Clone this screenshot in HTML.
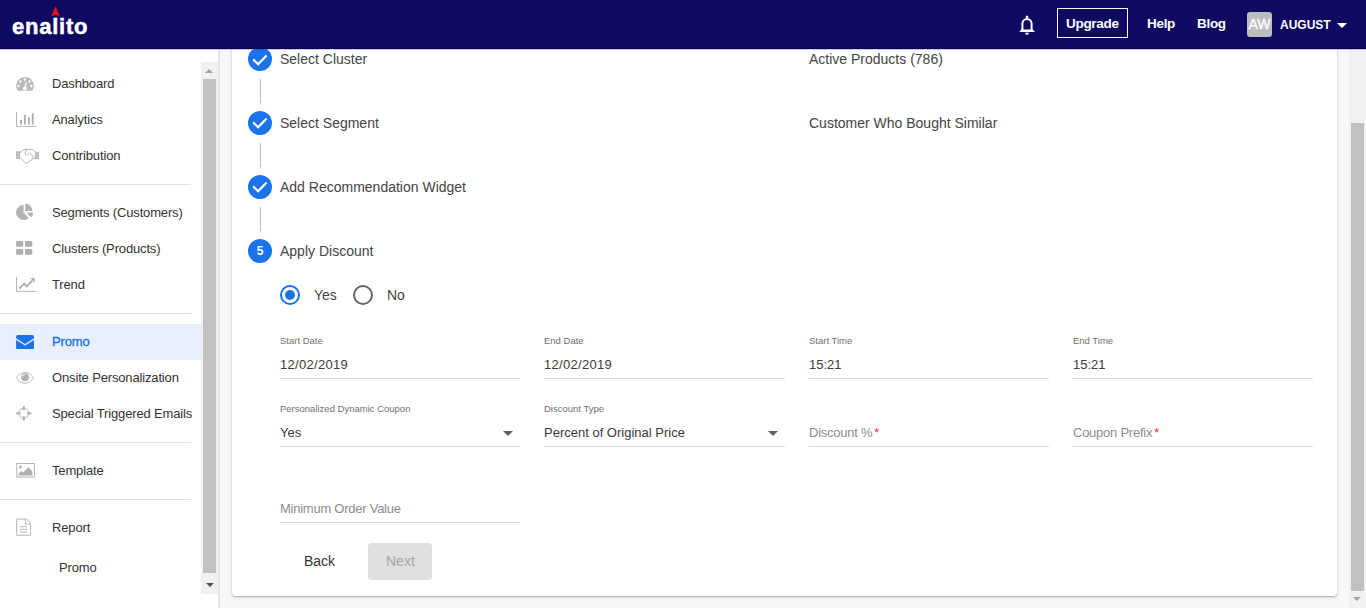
<!DOCTYPE html>
<html><head><meta charset="utf-8">
<style>
*{box-sizing:border-box;margin:0;padding:0}
html,body{width:1366px;height:608px;overflow:hidden;background:#f6f7f9;font-family:"Liberation Sans",sans-serif;color:#333}
.a{position:absolute}
#hdr{position:absolute;left:0;top:0;width:1366px;height:48px;background:#0e0a62;z-index:10}
#hdrline{position:absolute;left:0;top:48px;width:1366px;height:1px;background:#00005a;z-index:11}
#hdrfade{position:absolute;left:0;top:49px;width:1366px;height:1px;background:rgba(60,50,140,.25);z-index:11}
.hl{position:absolute;font-weight:bold;color:#fff;white-space:nowrap;font-size:13px;line-height:16px}
#side{position:absolute;left:0;top:48px;width:218px;height:560px;background:#fff}
.mi{position:absolute;left:52px;font-size:13px;color:#333;white-space:nowrap;line-height:16px;letter-spacing:-.15px}
.dv{position:absolute;left:0;width:191px;height:1px;background:#e0e0e0}
.ic{position:absolute;left:12px;width:30px;height:24px}
#card{position:absolute;left:232px;top:-40px;width:1105px;height:636px;background:#fff;border-radius:4px;box-shadow:0 1px 3px rgba(0,0,0,.22),0 1px 1px rgba(0,0,0,.14)}
.st{position:absolute;left:280px;font-size:14px;color:#444;white-space:nowrap;line-height:16px}
.circ{position:absolute;left:248px;width:24px;height:24px;border-radius:50%;background:#1a73e8}
.conn{position:absolute;left:260px;width:1px;height:24px;background:#bdbdbd}
.lbl{position:absolute;font-size:9.5px;color:#707070;white-space:nowrap;line-height:12px}
.val{position:absolute;font-size:13px;color:#3a3a3a;white-space:nowrap;line-height:16px}
.ul{position:absolute;width:240px;height:1px;background:#dadada}
.ph{position:absolute;font-size:13px;color:#8c8c8c;white-space:nowrap;line-height:16px;letter-spacing:-.25px}
.req{color:#e53935}
.tri{position:absolute;width:0;height:0;border-left:5px solid transparent;border-right:5px solid transparent;border-top:5px solid #606060}
</style></head><body>

<!-- main background pieces -->
<div class="a" style="left:218px;top:48px;width:2px;height:560px;background:#e3e4e6"></div>

<div id="card"></div>

<!-- stepper -->
<div class="circ" style="top:47px"></div>
<div class="circ" style="top:111px"></div>
<div class="circ" style="top:175px"></div>
<div class="circ" style="top:239px"></div>
<svg class="a" style="left:248px;top:47px" width="24" height="24"><path d="M5.2 12.4 L10.1 17.3 L18.6 8.4" fill="none" stroke="#fff" stroke-width="2.2"/></svg>
<svg class="a" style="left:248px;top:111px" width="24" height="24"><path d="M5.2 11.4 L10.1 16.3 L18.6 7.4" fill="none" stroke="#fff" stroke-width="2.2"/></svg>
<svg class="a" style="left:248px;top:175px" width="24" height="24"><path d="M5.2 11.4 L10.1 16.3 L18.6 7.4" fill="none" stroke="#fff" stroke-width="2.2"/></svg>
<div class="a" style="left:248px;top:243px;width:24px;text-align:center;font-size:12px;font-weight:bold;color:#fff;line-height:16px">5</div>
<div class="conn" style="top:79px"></div>
<div class="conn" style="top:143px"></div>
<div class="conn" style="top:207px"></div>

<div class="st" style="top:51px">Select Cluster</div>
<div class="st" style="top:115px">Select Segment</div>
<div class="st" style="top:179px">Add Recommendation Widget</div>
<div class="st" style="top:243px">Apply Discount</div>
<div class="st" style="left:809px;top:51px">Active Products (786)</div>
<div class="st" style="left:809px;top:115px">Customer Who Bought Similar</div>

<!-- radios -->
<svg class="a" style="left:280px;top:285px" width="20" height="20"><circle cx="10" cy="10" r="9" fill="none" stroke="#1a73e8" stroke-width="2"/><circle cx="10" cy="10" r="5" fill="#1a73e8"/></svg>
<svg class="a" style="left:353px;top:285px" width="20" height="20"><circle cx="10" cy="10" r="9" fill="none" stroke="#666" stroke-width="2"/></svg>
<div class="st" style="left:314px;top:287px">Yes</div>
<div class="st" style="left:387px;top:287px">No</div>

<!-- row 1 -->
<div class="lbl" style="left:280px;top:335px">Start Date</div>
<div class="lbl" style="left:544px;top:335px">End Date</div>
<div class="lbl" style="left:809px;top:335px">Start Time</div>
<div class="lbl" style="left:1073px;top:335px">End Time</div>
<div class="val" style="left:280px;top:357px;letter-spacing:.3px">12/02/2019</div>
<div class="val" style="left:544px;top:357px;letter-spacing:.3px">12/02/2019</div>
<div class="val" style="left:809px;top:357px">15:21</div>
<div class="val" style="left:1073px;top:357px">15:21</div>
<div class="ul" style="left:280px;top:378px"></div>
<div class="ul" style="left:544px;top:378px;width:241px"></div>
<div class="ul" style="left:809px;top:378px"></div>
<div class="ul" style="left:1073px;top:378px"></div>

<!-- row 2 -->
<div class="lbl" style="left:280px;top:403px">Personalized Dynamic Coupon</div>
<div class="lbl" style="left:544px;top:403px">Discount Type</div>
<div class="val" style="left:280px;top:425px">Yes</div>
<div class="val" style="left:544px;top:425px">Percent of Original Price</div>
<div class="tri" style="left:503px;top:431px"></div>
<div class="tri" style="left:768px;top:431px"></div>
<div class="ph" style="left:809px;top:425px">Discount %<span class="req" style="margin-left:2px">*</span></div>
<div class="ph" style="left:1073px;top:425px">Coupon Prefix<span class="req" style="margin-left:2px">*</span></div>
<div class="ul" style="left:280px;top:446px"></div>
<div class="ul" style="left:544px;top:446px;width:241px"></div>
<div class="ul" style="left:809px;top:446px"></div>
<div class="ul" style="left:1073px;top:446px"></div>

<!-- row 3 -->
<div class="ph" style="left:280px;top:501px">Minimum Order Value</div>
<div class="ul" style="left:280px;top:522px"></div>

<!-- buttons -->
<div class="a" style="left:304px;top:553px;font-size:14px;color:#333;line-height:16px">Back</div>
<div class="a" style="left:368px;top:543px;width:64px;height:37px;border-radius:4px;background:#e0e0e0"></div>
<div class="a" style="left:386px;top:553px;font-size:14px;color:#a6a6a6;line-height:16px">Next</div>

<!-- right scrollbar -->
<div class="a" style="left:1349px;top:48px;width:17px;height:560px;background:#f1f1f1"></div>
<div class="a" style="left:1351px;top:123px;width:13px;height:468px;background:#c1c1c1"></div>
<div class="tri" style="left:1353px;top:597px;border-top-color:#a3a3a3;border-left-width:4px;border-right-width:4px;border-top-width:4px"></div>

<!-- sidebar -->
<div id="side"></div>
<div class="a" style="left:0;top:324px;width:201px;height:36px;background:#e8f0fe"></div>
<div class="dv" style="top:184px"></div>
<div class="dv" style="top:313px"></div>
<div class="dv" style="top:442px"></div>
<div class="dv" style="top:499px"></div>

<div class="mi" style="top:76px">Dashboard</div>
<div class="mi" style="top:112px">Analytics</div>
<div class="mi" style="top:148px">Contribution</div>
<div class="mi" style="top:205px">Segments (Customers)</div>
<div class="mi" style="top:241px">Clusters (Products)</div>
<div class="mi" style="top:277px">Trend</div>
<div class="mi" style="top:334px;color:#1a73e8;-webkit-text-stroke:.35px #1a73e8">Promo</div>
<div class="mi" style="top:370px">Onsite Personalization</div>
<div class="mi" style="top:406px">Special Triggered Emails</div>
<div class="mi" style="top:463px">Template</div>
<div class="mi" style="top:520px">Report</div>
<div class="mi" style="left:59px;top:560px">Promo</div>

<!-- sidebar icons -->
<svg class="ic" style="top:72px" viewBox="0 0 30 24"><path d="M5.6 18.75 A8.9 8.9 0 1 1 20.4 18.75 Z" fill="#b9b9b9"/><g fill="#fff"><circle cx="12.8" cy="7.5" r="1.2"/><circle cx="8.3" cy="9.5" r="1.2"/><circle cx="17.6" cy="9.5" r="1.2"/><circle cx="6.5" cy="14" r="1.2"/><circle cx="19.3" cy="14" r="1.2"/><circle cx="12.9" cy="16.4" r="1.9"/></g><path d="M12.6 16 L14.6 10.2" stroke="#fff" stroke-width="1.2"/></svg>
<svg class="ic" style="top:108px" viewBox="0 0 30 24"><path d="M4.5 3.9 V18.4 H24.3" fill="none" stroke="#b5b5b5" stroke-width="1"/><g fill="#b0b0b0"><rect x="8" y="11.8" width="1.9" height="4.8"/><rect x="12" y="6.5" width="1.9" height="10.1"/><rect x="15.9" y="9.3" width="1.9" height="7.3"/><rect x="19.8" y="5.1" width="1.9" height="11.5"/></g></svg>
<svg class="ic" style="top:144px" viewBox="0 0 30 24"><g fill="none" stroke="#b5b5b5" stroke-width="1"><rect x="4.6" y="7.8" width="3" height="6.6" fill="#c5c5c5"/><rect x="23.6" y="8.2" width="3" height="6.2" fill="#c5c5c5"/><path d="M7.6 8.2 H9.2 L11.6 5.4 H15 L20.2 5.4 L22.4 7.8 H23.6"/><path d="M7.6 14.2 H8.6 L13.4 18.8 H15.2 L21.4 14.6 H23.6"/><path d="M15 5.4 L13.2 7.8 Q12.6 10.6 14.6 11.4 L17.8 8.8 L21.4 13.2 L20.8 14.8"/></g></svg>
<svg class="ic" style="top:198px" viewBox="0 0 30 24"><g fill="#b3b3b3"><path d="M11.6 6.9 A7.5 7.5 0 1 0 16.7 19.9 L11.6 14.4 Z"/><path d="M13.2 5.6 A7.3 7.3 0 0 1 20.5 12.9 L13.2 12.9 Z"/><path d="M14.4 14.4 L21.1 14.4 A7.4 7.4 0 0 1 19.3 19.6 Z"/></g></svg>
<svg class="ic" style="top:236px" viewBox="0 0 30 24"><g fill="#b0b0b0"><rect x="4.1" y="5" width="7.1" height="5.8" rx=".6"/><rect x="13" y="5" width="7.3" height="5.8" rx=".6"/><rect x="4.1" y="12.9" width="7.1" height="5.9" rx=".6"/><rect x="13" y="12.9" width="7.3" height="5.9" rx=".6"/></g></svg>
<svg class="ic" style="top:272px" viewBox="0 0 30 24"><path d="M4.5 5 V19.4 H24" fill="none" stroke="#b5b5b5" stroke-width="1"/><path d="M7.3 16.6 L12.3 11.6 L14.6 14.4 L20.6 8.4" fill="none" stroke="#b0b0b0" stroke-width="1.9"/><path d="M18.4 6 H22.8 V10.5 Z" fill="#b0b0b0"/></svg>
<svg class="ic" style="top:366px" viewBox="0 0 30 24"><path d="M4.6 11.9 C6.6 8 9.6 6.6 13 6.6 C16.4 6.6 19.4 8 21.4 11.9 C19.4 15.8 16.4 17.1 13 17.1 C9.6 17.1 6.6 15.8 4.6 11.9 Z" fill="none" stroke="#b5b5b5" stroke-width="1"/><circle cx="13" cy="11.2" r="3.9" fill="#b0b0b0"/><path d="M10.4 11.4 A2.8 2.8 0 0 1 13.4 8.2" fill="none" stroke="#fff" stroke-width=".9"/></svg>
<svg class="ic" style="top:401px" viewBox="0 0 30 24"><circle cx="11.8" cy="12.3" r="5" fill="none" stroke="#b5b5b5" stroke-width="1"/><g stroke="#b0b0b0" stroke-width="2"><path d="M11.8 5 V9.4"/><path d="M11.8 15.2 V19.6"/><path d="M4.2 12.3 H8.6"/><path d="M15 12.3 H19.3"/></g></svg>
<svg class="ic" style="top:458px" viewBox="0 0 30 24"><rect x="4.8" y="5.5" width="17.6" height="13.6" fill="none" stroke="#b5b5b5" stroke-width="1"/><circle cx="8.4" cy="9.1" r="1.5" fill="#b0b0b0"/><path d="M6.6 17.6 V15.8 L9.2 13 L11.2 14.6 L16.4 9.2 L20.4 13.2 V17.6 Z" fill="#b0b0b0"/></svg>
<svg class="ic" style="top:515px" viewBox="0 0 30 24"><g fill="none" stroke="#b8b8b8" stroke-width="1"><path d="M4.6 4 H14.6 L18.4 8 V20.3 H4.6 Z"/><path d="M13.6 4 V9.2 H18.4"/><path d="M8 11.7 H15 M8 14.4 H15 M8 17 H15"/></g></svg>
<svg class="ic" style="top:330px" viewBox="0 0 30 24"><path d="M5.8 4.9 H20.3 Q22 4.9 22 6.8 V8.3 L13.1 13.9 L4.1 8.3 V6.8 Q4.1 4.9 5.8 4.9 Z" fill="#1a73e8"/><path d="M4.1 9.9 L13.1 15.4 L22 9.9 V18.3 Q22 18.9 21.4 18.9 H4.7 Q4.1 18.9 4.1 18.3 Z" fill="#1a73e8"/></svg>

<!-- sidebar scrollbar -->
<div class="a" style="left:201px;top:62px;width:17px;height:532px;background:#f1f1f1"></div>
<div class="a" style="left:203px;top:79px;width:13px;height:494px;background:#c1c1c1"></div>
<div class="tri" style="left:205px;top:69px;border-top:none;border-bottom:4px solid #a3a3a3;border-left-width:4px;border-right-width:4px"></div>
<div class="tri" style="left:206px;top:583px;border-top-color:#505050;border-left-width:4px;border-right-width:4px;border-top-width:4px"></div>

<!-- header -->
<div id="hdr">
  <div class="a" style="left:12px;top:14px;font-size:22px;font-weight:bold;color:#fff;line-height:26px;letter-spacing:.75px;-webkit-text-stroke:.5px #fff">enalito</div>
  <svg class="a" style="left:50px;top:5px" width="12" height="13"><path d="M5.5 1.3 L9.8 11.6 L5.5 9.8 L1.2 11.6 Z" fill="#ee1111"/></svg>
  <svg class="a" style="left:1012px;top:10px" width="30" height="30"><path d="M10.4 20.6 V13.6 A4.6 4.6 0 0 1 19.6 13.6 V20.6" fill="none" stroke="#fff" stroke-width="2"/><path d="M7.2 22 L9.4 19.6 H20.6 L23 22 Z" fill="#fff"/><ellipse cx="15" cy="7.1" rx="1.4" ry="1.5" fill="#fff"/><path d="M13.1 22.8 H17 A1.95 2 0 0 1 13.1 22.8 Z" fill="#fff"/></svg>
  <div class="a" style="left:1057px;top:8px;width:71px;height:30px;border:1px solid #fff"></div>
  <div class="hl" style="left:1066px;top:16px;font-size:13.5px;letter-spacing:-.3px">Upgrade</div>
  <div class="hl" style="left:1147px;top:16px;font-size:13.5px;letter-spacing:-.3px">Help</div>
  <div class="hl" style="left:1197px;top:16px;font-size:13.5px;letter-spacing:-.3px">Blog</div>
  <div class="a" style="left:1247px;top:12px;width:25px;height:25px;border-radius:3px;background:#bdbdbd"></div>
  <div class="hl" style="left:1248px;top:16px;width:23px;text-align:center;color:#fff;font-weight:normal;font-size:14px;-webkit-text-stroke:.3px #fff">AW</div>
  <div class="hl" style="left:1280px;top:17px;font-size:12px">AUGUST</div>
  <div class="tri" style="left:1337px;top:23px;border-top-color:#fff"></div>
</div>
<div id="hdrline"></div>
<div id="hdrfade"></div>

</body></html>
